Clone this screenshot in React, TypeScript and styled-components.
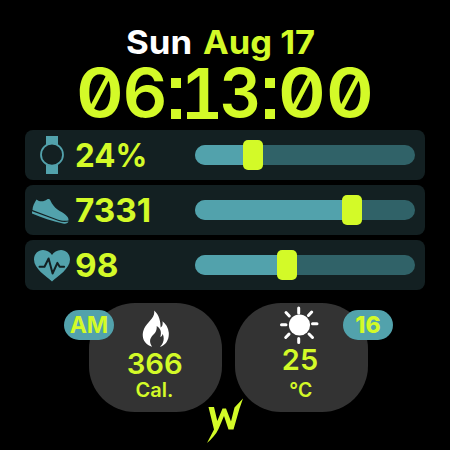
import React from 'react';
import styled, { createGlobalStyle } from 'styled-components';

const lime = '#d3fa28';
const teal = '#52a2ac';

const GlobalStyle = createGlobalStyle`
  html, body { margin: 0; background: #000; }
  * { box-sizing: border-box; }
`;

const Face = styled.main`
  width: 450px;
  height: 450px;
  overflow: hidden;
  background: #000;
  color: ${lime};
  font-family: Inter, 'Liberation Sans', sans-serif;
  font-weight: 600;
  display: flex;
  flex-direction: column;
  align-items: center;
`;

const DateLine = styled.header`
  width: 450px;
  height: 64px;
  padding: 22px 0 0 126px;
  display: flex;
  line-height: 40px;
`;

const Label = styled.span<{ $size: number; $stretch?: number; $weight?: number; $color?: string; $width?: number }>`
  display: block;
  flex: none;
  width: ${p => (p.$width ? p.$width + 'px' : 'auto')};
  white-space: nowrap;
  font-size: ${p => p.$size}px;
  font-weight: ${p => p.$weight ?? 600};
  color: ${p => p.$color ?? lime};
  transform: scaleX(${p => p.$stretch ?? 1});
  transform-origin: ${p => (p.$width ? 'left' : 'center')};
`;

const Clock = styled.div`
  width: 450px;
  height: 66px;
  padding-left: 76px;
  display: flex;
  font-size: 67px;
  line-height: 58px;
  font-weight: 640;
  font-feature-settings: 'zero' 1;
`;

const Digit = styled.span<{ $width: number; $stretch?: number }>`
  width: ${p => p.$width}px;
  display: flex;
  justify-content: center;
  transform: scaleX(${p => p.$stretch ?? 1});
`;

const Colon = styled.span`
  width: 20px;
  height: 58px;
  padding: 14px 5px 3px;
  display: flex;
  flex-direction: column;
  justify-content: space-between;
  &::before, &::after { content: ''; width: 10px; height: 10px; background: ${lime}; }
`;

const One = styled(Digit)`
  position: relative;
  padding-right: 8px;
  &::after {
    content: '';
    position: absolute;
    left: 1px;
    top: 48px;
    width: 31px;
    height: 7px;
    background: ${lime};
  }
`;

const Stats = styled.section`
  display: flex;
  flex-direction: column;
  gap: 5px;
`;

const Row = styled.div`
  width: 400px;
  height: 50px;
  border-radius: 8px;
  background: #132022;
  display: flex;
  align-items: center;
`;

const IconBox = styled.div`
  width: 50px;
  height: 50px;
  flex: none;
  svg { display: block; }
`;

const Value = styled.div`
  width: 120px;
  flex: none;
  line-height: 50px;
`;

const Track = styled.div`
  width: 220px;
  height: 20px;
  border-radius: 10px;
  background: #306268;
  display: flex;
  align-items: center;
`;

const Fill = styled.div<{ $width: number }>`
  width: ${p => p.$width}px;
  height: 20px;
  border-radius: 10px 0 0 10px;
  background: ${teal};
`;

const Thumb = styled.div`
  width: 20px;
  height: 30px;
  margin-left: -2px;
  border-radius: 5px;
  background: ${lime};
`;

const Cards = styled.section`
  margin: 13px 0 0 7px;
  display: flex;
  gap: 13px;
`;

const Card = styled.div`
  position: relative;
  width: 133px;
  height: 109px;
  border-radius: 46px;
  background: #333;
  display: flex;
  flex-direction: column;
  align-items: center;
`;

const CardIcon = styled.div<{ $height: number; $shift?: number }>`
  height: ${p => p.$height}px;
  margin-left: ${p => p.$shift ?? 0}px;
  svg { display: block; }
`;

const Amount = styled.div<{ $height: number; $shift?: number }>`
  height: ${p => p.$height}px;
  margin-left: ${p => p.$shift ?? 0}px;
  line-height: 28px;
`;

const Unit = styled.div`
  margin-left: -2px;
  line-height: 24px;
`;

const Badge = styled.div<{ $side: 'left' | 'right' }>`
  position: absolute;
  top: 7px;
  ${p => p.$side}: -25px;
  width: 50px;
  height: 30px;
  border-radius: 15px;
  background: ${teal};
  display: flex;
  justify-content: center;
  line-height: 31px;
`;

const Brand = styled.footer`
  margin-top: -14px;
  svg { display: block; }
`;

const WatchIcon = () => (
  <svg width="50" height="50" viewBox="0 0 50 50">
    <path fill={teal} d="M21 6h12v9H21zM21 35h12v9H21z" />
    <circle cx="27" cy="24.700" r="11" fill="#132022" stroke={teal} strokeWidth="1.8" />
  </svg>
);

const ShoeIcon = () => (
  <svg width="50" height="50" viewBox="0 0 50 50" fill={teal}>
    <path d="M11.500 14.400c3 2.600 7.500 2.300 10.500.1 1.500-.8 3-.3 3.500 1.300 1.500 3.500 4 6.500 7 8.700 3 2.200 5.500 3 8 5.200 2.200 1.900 3.300 3.500 3 5.700-3.500 1-7.500.3-11-1L7.500 25C7.500 21 9.500 17.500 11.500 14.400Z" />
    <path d="m7 26.300 26 9.500c3.500 1.200 7 1.500 10.500.8-.6 2-3 2.400-5.500 1.900-11-2.500-21-5.800-31-10Z" />
  </svg>
);

const HeartIcon = () => (
  <svg width="50" height="50" viewBox="0 0 50 50">
    <path fill={teal} d="M27 41.500C21 36 9 29 9 19.600 9 13.500 13.300 10 18 10c4 0 7.200 2.200 9 5 1.800-2.800 5-5 9-5 4.700 0 9 3.500 9 9.600C45 29 33 36 27 41.500Z" />
    <path d="M14.500 26.800h5l4.100-8.300 4 15 4.800-10.600 2.300 3.900h4.400" fill="none" stroke="#132022" strokeWidth="2" strokeLinecap="round" strokeLinejoin="round" />
  </svg>
);

const FlameIcon = () => (
  <svg width="30" height="46" viewBox="0 0 30 46" fill="#fff">
    <path d="M13.100 7.500C14.500 15 6.500 18.500 3.200 25.500-.5 34 3 41.500 11.200 43.800 7.500 38.500 9 35 12.500 31.500c2.500-2.500 3.500-5 3.200-8.500 4.500 3 4.800 6.500 3.600 11 1.500-.5 2.200-1.800 2.400-3.200 2 4.700 1 9.500-2.800 13 6-1.800 9.300-7.300 8.900-14-.4-5-3-9-6.300-11.500.5 3.500-.3 5-1.900 6.300 0-6.500-1.500-13-6.500-17.100Z" />
  </svg>
);

const SunIcon = () => (
  <svg width="40" height="42" viewBox="0 0 40 42">
    <circle cx="20.500" cy="22" r="10.600" fill="#fff" />
    <path d="M19.700 5v5M19.700 35.500v4M2.500 21.700H7M33.500 20.700H38M7 9.500l3.300 3.500M32.700 9l-3.300 3.500M6.700 34.500l3.300-3.400M33.500 34.500 30 31" stroke="#fff" strokeWidth="3" strokeLinecap="round" fill="none" />
  </svg>
);

const BrandMark = () => (
  <svg width="40" height="50" viewBox="0 0 40 50" fill={lime}>
    <path d="M3.500 9H9L12.300 23 17.500 10.500H21L26 23.500 29.500 9.500 38 .5 34.500 10.500 28.500 31.500H23.500L19 18 13.500 31C11 36.500 6.500 41 2 45L9 31.500Z" />
  </svg>
);

const stats = [
  { icon: <WatchIcon />, text: '24%', stretch: 0.95, fill: 50 },
  { icon: <ShoeIcon />, text: '7331', stretch: 1.01, fill: 149 },
  { icon: <HeartIcon />, text: '98', stretch: 1.01, fill: 84 },
];

export default function App() {
  return (
    <Face>
      <GlobalStyle />
      <DateLine>
        <Label $size={33} $width={77} $weight={650} $stretch={1.055} $color="#fff">Sun</Label>
        <Label $size={33} $width={120} $weight={650} $stretch={1.045}>Aug 17</Label>
      </DateLine>
      <Clock>
        <Digit $width={48} $stretch={1.07}>0</Digit>
        <Digit $width={42} $stretch={1.04}>6</Digit>
        <Colon />
        <One $width={34}>1</One>
        <Digit $width={40} $stretch={0.96}>3</Digit>
        <Colon />
        <Digit $width={44} $stretch={1.07}>0</Digit>
        <Digit $width={52} $stretch={1.07}>0</Digit>
      </Clock>
      <Stats>
        {stats.map(s => (
          <Row key={s.text}>
            <IconBox>{s.icon}</IconBox>
            <Value><Label $size={33} $width={110} $weight={650} $stretch={s.stretch}>{s.text}</Label></Value>
            <Track>
              <Fill $width={s.fill} />
              <Thumb />
            </Track>
          </Row>
        ))}
      </Stats>
      <Cards>
        <Card>
          <CardIcon $height={47}><FlameIcon /></CardIcon>
          <Amount $height={28} $shift={-2}><Label $size={29} $weight={640} $stretch={1.01}>366</Label></Amount>
          <Unit><Label $size={20}>Cal.</Label></Unit>
          <Badge $side="left"><Label $size={23} $weight={750}>AM</Label></Badge>
        </Card>
        <Card>
          <CardIcon $height={43} $shift={-5}><SunIcon /></CardIcon>
          <Amount $height={32} $shift={-3}><Label $size={29} $weight={640}>25</Label></Amount>
          <Unit><Label $size={20} $stretch={0.97}>°C</Label></Unit>
          <Badge $side="right"><Label $size={23} $weight={800}>16</Label></Badge>
        </Card>
      </Cards>
      <Brand><BrandMark /></Brand>
    </Face>
  );
}
